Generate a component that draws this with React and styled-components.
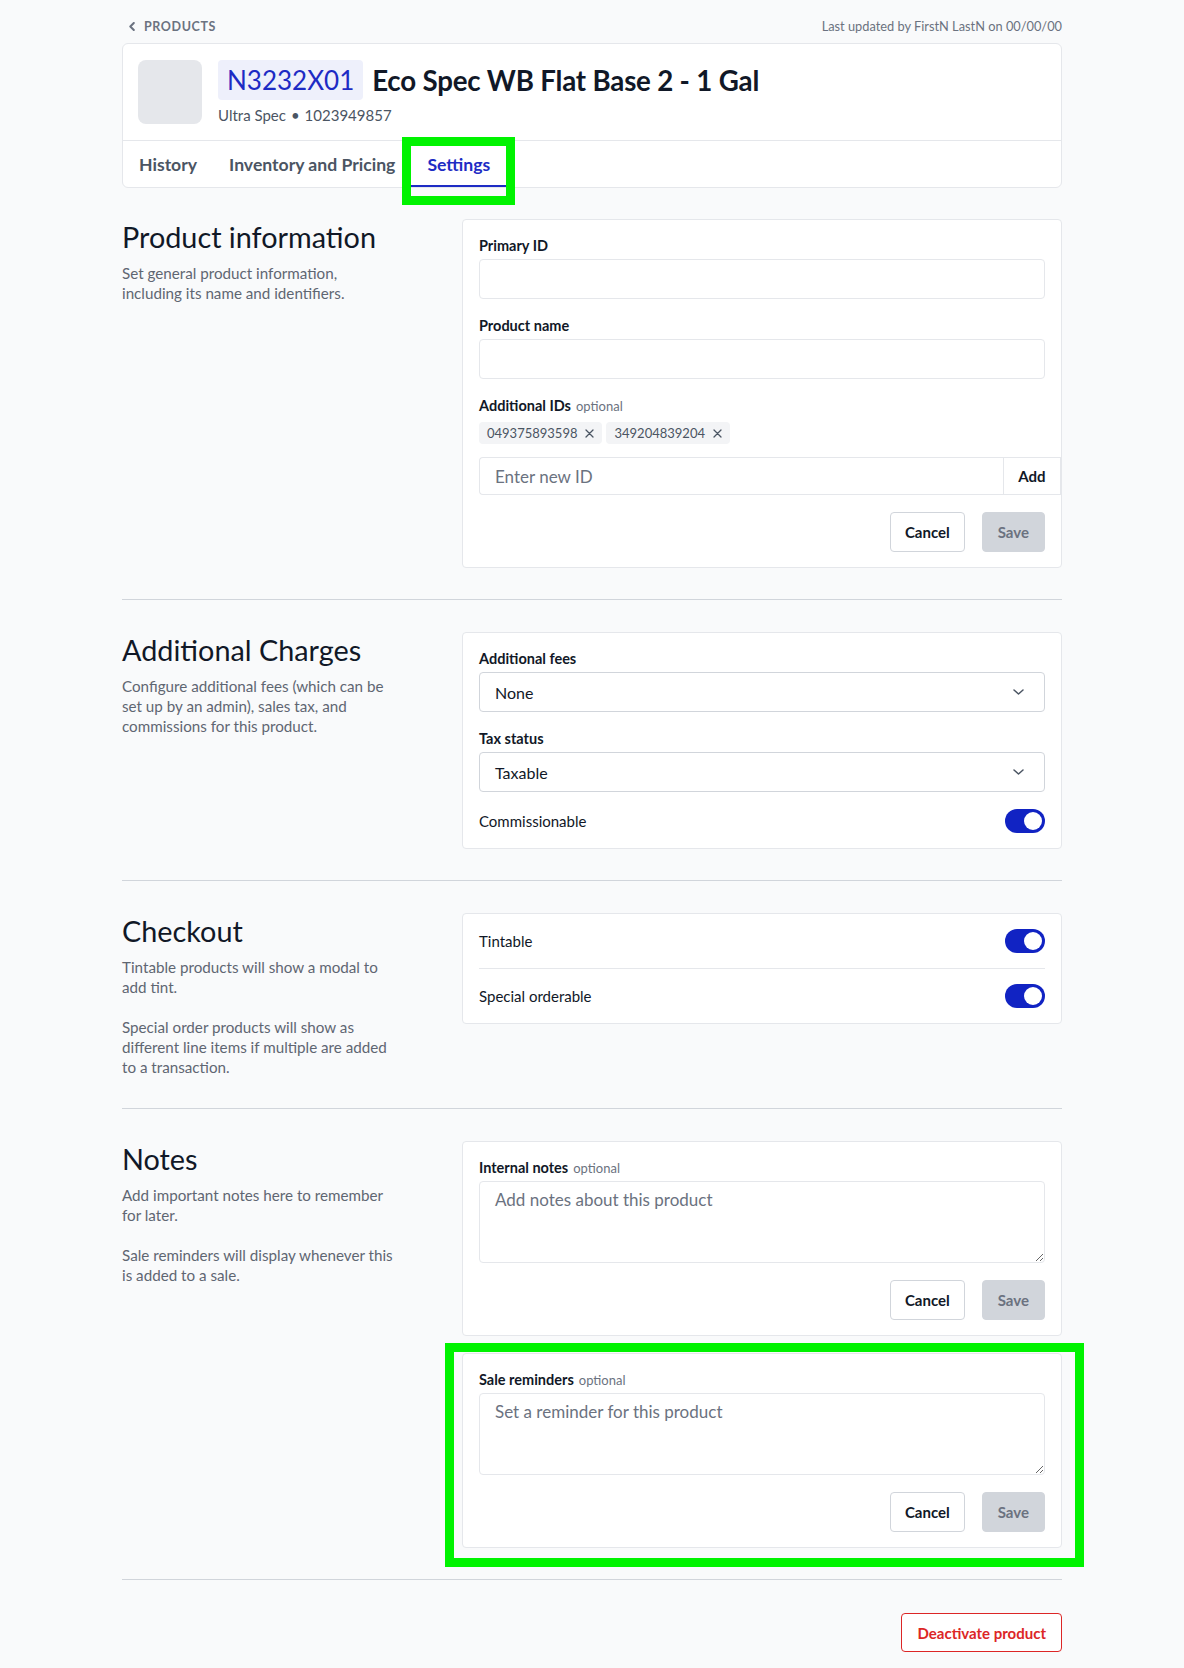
import React from 'react';
import styled, {createGlobalStyle, css} from 'styled-components';

const GlobalStyle = createGlobalStyle`
  body {
    margin: 0;
    background: #f9fafb;
    font-family: Lato, 'Noto Sans', sans-serif;
    color: #111827;
  }
  * {
    box-sizing: border-box;
  }
`;

// 高亮框（截图里的绿色标注）
const highlight = css`
  position: relative;
  &::after {
    content: '';
    position: absolute;
    border: 9px solid #00f300;
    pointer-events: none;
    top: ${p => p.$box[0]}px;
    right: ${p => p.$box[1]}px;
    bottom: ${p => p.$box[2]}px;
    left: ${p => p.$box[3]}px;
  }
`;

const Page = styled.div`
  width: 940px;
  margin: 0 auto;
  padding: 17px 0 17px;
`;

const TopBar = styled.div`
  display: flex;
  justify-content: space-between;
  align-items: center;
  height: 18px;
  margin-bottom: 8px;
`;

const Back = styled.div`
  display: flex;
  align-items: center;
  gap: 9px;
  padding-left: 7px;
  font-size: 12.5px;
  font-weight: 700;
  letter-spacing: 0.6px;
  color: #6b7280;
`;

const Updated = styled.div`
  font-size: 12.8px;
  color: #6b7280;
`;

const HeaderCard = styled.div`
  background: #fff;
  border: 1px solid #e5e7eb;
  border-radius: 6px;
`;

const HeaderTop = styled.div`
  display: flex;
  gap: 16px;
  padding: 16px 15px 15px;
  border-bottom: 1px solid #e5e7eb;
`;

const Thumb = styled.div`
  width: 64px;
  height: 64px;
  border-radius: 8px;
  background: #e5e7eb;
`;

const TitleRow = styled.div`
  display: flex;
  align-items: center;
  gap: 9px;
  height: 40px;
`;

const Code = styled.span`
  display: inline-flex;
  align-items: center;
  height: 40px;
  padding: 0 9px;
  border-radius: 4px;
  background: #eef0fb;
  color: #1d2bc4;
  font-size: 26px;
`;

const Title = styled.h1`
  margin: 0;
  font-size: 27.7px;
  font-weight: 700;
  letter-spacing: -0.2px;
`;

const Sub = styled.div`
  margin-top: 5px;
  font-size: 15px;
  line-height: 20px;
  color: #4b5563;
  span {
    margin: 0 5px;
  }
`;

const Tabs = styled.div`
  display: flex;
  height: 46px;
`;

const Tab = styled.div`
  display: flex;
  align-items: center;
  padding: 2px 16px 0;
  font-size: 17.6px;
  font-weight: 700;
  color: ${p => (p.$active ? '#1d2bc4' : '#4b5563')};
  border-bottom: 2px solid ${p => (p.$active ? '#1d2bc4' : 'transparent')};
  ${p => p.$box && highlight}
`;

const Section = styled.section`
  display: grid;
  grid-template-columns: 1fr 600px;
  padding: 32px 0 31px;
  border-bottom: 1px solid #d1d5db;
  &:first-of-type {
    padding-top: 31px;
  }
`;

const Intro = styled.div`
  padding-right: 20px;
`;

const Heading = styled.h2`
  margin: 0 0 8px;
  font-size: 28.8px;
  font-weight: 400;
  line-height: 36px;
`;

const Desc = styled.p`
  margin: 0 0 20px;
  font-size: 15.2px;
  line-height: 20px;
  color: #5f6672;
  white-space: pre-line;
  &:last-child {
    margin-bottom: 0;
  }
`;

const Stack = styled.div`
  display: flex;
  flex-direction: column;
  gap: 17px;
`;

const Card = styled.div`
  background: #fff;
  border: 1px solid #e5e7eb;
  border-radius: 4px;
  padding: ${p => (p.$list ? '0 16px' : '16px 16px 15px')};
  ${p => p.$box && highlight}
`;

const Field = styled.div`
  margin-bottom: ${p => p.$gap ?? 17}px;
`;

const Label = styled.div`
  margin-bottom: 3px;
  font-size: 14.5px;
  line-height: 20px;
  font-weight: 700;
  color: #111827;
  span {
    margin-left: 5px;
    font-size: 13px;
    font-weight: 400;
    color: #6b7280;
  }
`;

const Input = styled.div`
  height: 40px;
  border: 1px solid #e5e7eb;
  border-radius: 4px;
`;

const Chips = styled.div`
  display: flex;
  gap: 4px;
  margin-top: 6px;
`;

const Chip = styled.div`
  display: flex;
  align-items: center;
  gap: 8px;
  height: 22px;
  padding: 0 8px;
  border-radius: 4px;
  background: #f3f4f6;
  font-size: 13px;
  color: #4b5563;
`;

const Group = styled.div`
  display: flex;
  height: 38px;
  margin: 13px -16px 0 0;
`;

const GroupInput = styled.div`
  flex: 1;
  display: flex;
  align-items: center;
  padding-left: 15px;
  border: 1px solid #e5e7eb;
  border-right: 0;
  border-radius: 4px 0 0 4px;
  font-size: 17px;
  color: #6b7280;
`;

const AddButton = styled.div`
  display: flex;
  align-items: center;
  justify-content: center;
  width: 58px;
  border: 1px solid #e5e7eb;
  font-size: 15px;
  font-weight: 700;
`;

const Actions = styled.div`
  display: flex;
  justify-content: flex-end;
  gap: 17px;
  margin-top: ${p => p.$top ?? 16}px;
`;

const Button = styled.div`
  display: flex;
  align-items: center;
  height: 40px;
  padding: 0 ${p => (p.$save ? 15 : 14)}px;
  border-radius: 4px;
  font-size: 15px;
  font-weight: 700;
  ${p =>
    p.$save
      ? css`
          background: #d1d5db;
          color: #6b7280;
          border: 1px solid #d1d5db;
        `
      : css`
          background: #fff;
          color: #111827;
          border: 1px solid #d1d5db;
        `}
`;

const Select = styled.div`
  display: flex;
  align-items: center;
  justify-content: space-between;
  height: 40px;
  padding: 0 20px 0 15px;
  border: 1px solid #d1d5db;
  border-radius: 4px;
  font-size: 16px;
  color: #111827;
`;

const Row = styled.div`
  display: flex;
  align-items: center;
  justify-content: space-between;
  padding: ${p => (p.$flat ? '0' : '15px 0')};
  font-size: 15px;
  & + & {
    border-top: 1px solid #e5e7eb;
  }
`;

const Switch = styled.div`
  position: relative;
  width: 40px;
  height: 24px;
  border-radius: 12px;
  background: #1123c3;
  &::after {
    content: '';
    position: absolute;
    top: 3px;
    right: 3px;
    width: 18px;
    height: 18px;
    border-radius: 50%;
    background: #fff;
  }
`;

const TextArea = styled.textarea`
  display: block;
  width: 100%;
  height: 82px;
  padding: 6px 15px;
  border: 1px solid #e5e7eb;
  border-radius: 4px;
  font-family: inherit;
  font-size: 17px;
  line-height: 24px;
  color: #111827;
  &::placeholder {
    color: #6b7280;
  }
`;

const Footer = styled.div`
  display: flex;
  justify-content: flex-end;
  padding-top: 33px;
`;

const Danger = styled.div`
  display: flex;
  align-items: center;
  height: 39px;
  padding: 0 15px;
  border: 1px solid #dc2626;
  border-radius: 4px;
  font-size: 15px;
  font-weight: 700;
  color: #dc2626;
  background: #fff;
`;

const Chevron = ({left, color = '#4b5563'}) => (
  <svg width={left ? 6 : 11} height={left ? 9 : 6} viewBox={left ? '0 0 6 9' : '0 0 11 6'} fill='none'>
    <path
      d={left ? 'M4.8 1L1.3 4.5L4.8 8' : 'M1 1L5.5 5L10 1'}
      stroke={color}
      strokeWidth={left ? 2 : 1.5}
      strokeLinecap='round'
      strokeLinejoin='round'
    />
  </svg>
);

const Cross = () => (
  <svg width='9' height='9' viewBox='0 0 9 9'>
    <path d='M1 1L8 8M8 1L1 8' stroke='#4b5563' strokeWidth='1.3' strokeLinecap='round' />
  </svg>
);

const Buttons = ({top}) => (
  <Actions $top={top}>
    <Button>Cancel</Button>
    <Button $save>Save</Button>
  </Actions>
);

const Intros = ({title, texts}) => (
  <Intro>
    <Heading>{title}</Heading>
    {texts.map(t => (
      <Desc key={t}>{t}</Desc>
    ))}
  </Intro>
);

const App = () => {
  const ids = ['049375893598', '349204839204'];
  return (
    <>
      <GlobalStyle />
      <Page>
        <TopBar>
          <Back>
            <Chevron left color='#6b7280' />
            PRODUCTS
          </Back>
          <Updated>Last updated by FirstN LastN on 00/00/00</Updated>
        </TopBar>

        <HeaderCard>
          <HeaderTop>
            <Thumb />
            <div>
              <TitleRow>
                <Code>N3232X01</Code>
                <Title>Eco Spec WB Flat Base 2 - 1 Gal</Title>
              </TitleRow>
              <Sub>
                Ultra Spec<span>•</span>1023949857
              </Sub>
            </div>
          </HeaderTop>
          <Tabs>
            <Tab>History</Tab>
            <Tab>Inventory and Pricing</Tab>
            <Tab $active $box={[-4, -9, -20, -9]}>
              Settings
            </Tab>
          </Tabs>
        </HeaderCard>

        <Section>
          <Intros
            title='Product information'
            texts={['Set general product information,\nincluding its name and identifiers.']}
          />
          <Card>
            <Field>
              <Label>Primary ID</Label>
              <Input />
            </Field>
            <Field>
              <Label>Product name</Label>
              <Input />
            </Field>
            <Field $gap={0}>
              <Label>
                Additional IDs<span>optional</span>
              </Label>
              <Chips>
                {ids.map(id => (
                  <Chip key={id}>
                    {id}
                    <Cross />
                  </Chip>
                ))}
              </Chips>
              <Group>
                <GroupInput>Enter new ID</GroupInput>
                <AddButton>Add</AddButton>
              </Group>
            </Field>
            <Buttons top={17} />
          </Card>
        </Section>

        <Section>
          <Intros
            title='Additional Charges'
            texts={[
              'Configure additional fees (which can be\nset up by an admin), sales tax, and\ncommissions for this product.'
            ]}
          />
          <Card>
            <Field>
              <Label>Additional fees</Label>
              <Select>
                None
                <Chevron />
              </Select>
            </Field>
            <Field>
              <Label>Tax status</Label>
              <Select>
                Taxable
                <Chevron />
              </Select>
            </Field>
            <Row $flat>
              Commissionable
              <Switch />
            </Row>
          </Card>
        </Section>

        <Section>
          <Intros
            title='Checkout'
            texts={[
              'Tintable products will show a modal to\nadd tint.',
              'Special order products will show as\ndifferent line items if multiple are added\nto a transaction.'
            ]}
          />
          <div>
            <Card $list>
              <Row>
                Tintable
                <Switch />
              </Row>
              <Row>
                Special orderable
                <Switch />
              </Row>
            </Card>
          </div>
        </Section>

        <Section>
          <Intros
            title='Notes'
            texts={[
              'Add important notes here to remember\nfor later.',
              'Sale reminders will display whenever this\nis added to a sale.'
            ]}
          />
          <Stack>
            <Card>
              <Label>
                Internal notes<span>optional</span>
              </Label>
              <TextArea placeholder='Add notes about this product' />
              <Buttons top={17} />
            </Card>
            <Card $box={[-11, -23, -20, -18]}>
              <Label>
                Sale reminders<span>optional</span>
              </Label>
              <TextArea placeholder='Set a reminder for this product' />
              <Buttons top={17} />
            </Card>
          </Stack>
        </Section>

        <Footer>
          <Danger>Deactivate product</Danger>
        </Footer>
      </Page>
    </>
  );
};

export default App;
